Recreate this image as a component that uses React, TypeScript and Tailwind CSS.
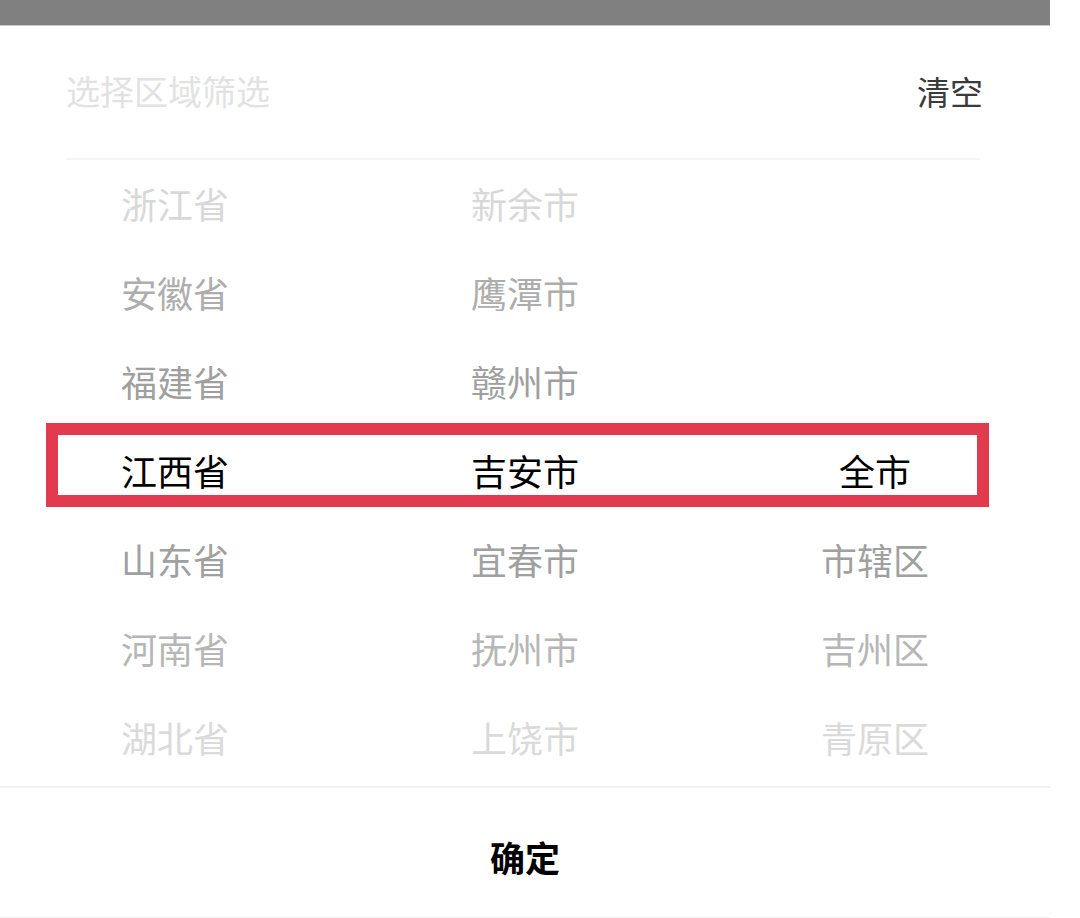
import React from 'react'

const FONT = { fontFamily: '"Noto Sans CJK SC", "Noto Sans", sans-serif' }

// fade by distance from the selected row
const rowColors = ['text-[#d8d8d8]', 'text-[#adadad]', 'text-[#9f9f9f]', 'text-black', 'text-[#a0a0a0]', 'text-[#b6b6b6]', 'text-[#dadada]']

const provinces = ['浙江省', '安徽省', '福建省', '江西省', '山东省', '河南省', '湖北省']
const cities = ['新余市', '鹰潭市', '赣州市', '吉安市', '宜春市', '抚州市', '上饶市']
const districts = ['', '', '', '全市', '市辖区', '吉州区', '青原区']

const Column = ({ items }: { items: string[] }) => (
  <div className="flex flex-col">
    {items.map((item, i) => (
      <div key={i} className={`h-[89px] pb-[6px] flex items-center justify-center text-[36px] leading-none ${rowColors[i]}`}>
        {item}
      </div>
    ))}
  </div>
)

export default function App() {
  return (
    <div className="bg-white min-h-[918px] w-[1080px] overflow-hidden" style={FONT}>
      <div className="w-[1050px] relative">
        <div className="h-[26px] bg-[#808080] border-b border-[#c8c8c8]" />

        <div className="flex items-center justify-between pl-[66px] pr-[67px] h-[132px] pb-[2px]">
          <span className="text-[34px] leading-none text-[#e2e2e2]">选择区域筛选</span>
          <span className="text-[33px] leading-none text-[#3a3a3a]">清空</span>
        </div>
        <div className="ml-[66px] mr-[70px] h-[2px] bg-[#f5f5f5]" />

        <div className="grid grid-cols-3 pt-[1px] pb-[2px]">
          <Column items={provinces} />
          <Column items={cities} />
          <Column items={districts} />
        </div>

        <div className="h-[2px] bg-[#f2f2f2]" />
        <div className="h-[129px] flex items-center justify-center pt-[8px]">
          <span className="text-[35px] leading-none font-bold text-black">确定</span>
        </div>
        <div className="h-[2px] bg-[#f0f0f0]" />

        {/* red highlight annotation */}
        <div className="absolute left-[46px] top-[423px] w-[943px] h-[84px] border-[12px] border-[#e23a4e]" />
      </div>
    </div>
  )
}
